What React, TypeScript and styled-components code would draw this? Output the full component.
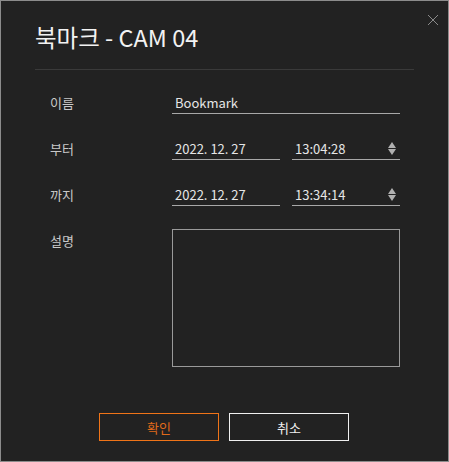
import React from "react";
import styled, { createGlobalStyle } from "styled-components";

const Global = createGlobalStyle`
  html, body { margin: 0; padding: 0; background: #222; }
  * { box-sizing: border-box; }
  body { font-family: "Noto Sans CJK KR", "Noto Sans", sans-serif; }
`;

const Dialog = styled.div`
  position: relative;
  width: 449px;
  height: 462px;
  background: #222222;
  border: 1px solid #8c8c8c;
  display: flex;
  flex-direction: column;
`;

const CloseButton = styled.button`
  position: absolute;
  top: 12px;
  right: 8px;
  width: 14px;
  height: 14px;
  padding: 0;
  border: none;
  background: transparent;
  display: flex;
  align-items: center;
  justify-content: center;
  cursor: pointer;
`;

const Header = styled.div`
  margin: 0 34px;
  padding-top: 19px;
  padding-bottom: 15px;
  border-bottom: 1px solid #3a3a3a;
`;

const Title = styled.h1`
  margin: 0;
  font-size: 23.5px;
  line-height: 34px;
  font-weight: 400;
  color: #f2f2f2;
`;

const Form = styled.div`
  display: flex;
  flex-direction: column;
  gap: 24px;
  padding: 22px 48px 0 49px;
`;

const Row = styled.div<{ $top?: boolean }>`
  display: flex;
  align-items: ${(p) => (p.$top ? "flex-start" : "flex-end")};
`;

const Label = styled.div`
  width: 122px;
  flex: none;
  font-size: 13px;
  line-height: 22px;
  color: #c8c8c8;
`;

const Fields = styled.div`
  flex: 1;
  display: flex;
  gap: 12px;
`;

const Field = styled.div`
  flex: 1;
  display: flex;
  align-items: center;
  height: 22px;
  padding-left: 3px;
  border-bottom: 1px solid #a8a8a8;
  font-size: 13px;
  color: #e6e6e6;
`;

const Value = styled.span`
  flex: 1;
`;

const Spinner = styled.span`
  display: flex;
  flex-direction: column;
  gap: 1px;
  margin-right: 4px;
`;

const Memo = styled.div`
  flex: 1;
  height: 138px;
  border: 1px solid #9a9a9a;
  margin-top: -1px;
`;

const Footer = styled.div`
  margin-top: auto;
  padding: 0 1px 20px 0;
  display: flex;
  justify-content: center;
  gap: 10px;
`;

const Button = styled.button<{ $primary?: boolean }>`
  width: 120px;
  height: 28px;
  background: transparent;
  border: 1px solid ${(p) => (p.$primary ? "#f07418" : "#f0f0f0")};
  color: ${(p) => (p.$primary ? "#e06a1a" : "#f0f0f0")};
  font-family: "Noto Sans CJK KR", "Noto Sans", sans-serif;
  font-size: 13px;
  padding: 0;
`;

const SpinIcon = () => (
  <Spinner>
    <svg width="8" height="6" viewBox="0 0 8 6">
      <path d="M4 0 L8 6 L0 6 Z" fill="#b0b0b0" />
    </svg>
    <svg width="8" height="6" viewBox="0 0 8 6">
      <path d="M0 0 L8 0 L4 6 Z" fill="#b0b0b0" />
    </svg>
  </Spinner>
);

export default function App() {
  return (
    <>
      <Global />
      <Dialog>
        <CloseButton aria-label="close">
          <svg width="12" height="12" viewBox="0 0 12 12">
            <path d="M1 1 L11 11 M11 1 L1 11" stroke="#8a8a8a" strokeWidth="1" />
          </svg>
        </CloseButton>
        <Header>
          <Title>북마크 - CAM 04</Title>
        </Header>
        <Form>
          <Row>
            <Label>이름</Label>
            <Fields>
              <Field>
                <Value>Bookmark</Value>
              </Field>
            </Fields>
          </Row>
          <Row>
            <Label>부터</Label>
            <Fields>
              <Field>
                <Value>2022. 12. 27</Value>
              </Field>
              <Field>
                <Value>13:04:28</Value>
                <SpinIcon />
              </Field>
            </Fields>
          </Row>
          <Row>
            <Label>까지</Label>
            <Fields>
              <Field>
                <Value>2022. 12. 27</Value>
              </Field>
              <Field>
                <Value>13:34:14</Value>
                <SpinIcon />
              </Field>
            </Fields>
          </Row>
          <Row $top>
            <Label>설명</Label>
            <Fields>
              <Memo />
            </Fields>
          </Row>
        </Form>
        <Footer>
          <Button $primary>확인</Button>
          <Button>취소</Button>
        </Footer>
      </Dialog>
    </>
  );
}
